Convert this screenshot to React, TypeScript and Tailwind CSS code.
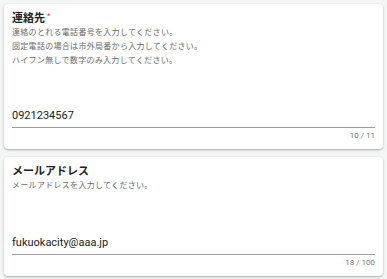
import React from 'react';

const font = { fontFamily: 'Roboto, "Noto Sans CJK JP", sans-serif' };

type FieldProps = {
  label: string;
  required?: boolean;
  hints: string[];
  value: string;
  counter: string;
  spacer: string;
};

function FieldCard({ label, required, hints, value, counter, spacer }: FieldProps) {
  return (
    <div className="rounded bg-white px-2 pt-[7px] pb-[8px] shadow-[0_1px_3px_rgba(0,0,0,0.2),0_1px_1px_rgba(0,0,0,0.12)]">
      <div className="flex items-start text-[11px] font-bold leading-[15px] text-[#222]">
        {label}
        {required && <span className="ml-[2px] text-[7px] leading-[11px] text-[#ef5350]">*</span>}
      </div>
      <div className="text-[8px] leading-[14px] tracking-[0.3px] text-[#6b6b6b]">
        {hints.map((h) => (
          <div key={h}>{h}</div>
        ))}
      </div>
      <div className={spacer} />
      <div className="border-b border-[#9e9e9e] pb-[3px] text-[11px] leading-[16px] text-[#222]">{value}</div>
      <div className="mt-[3px] text-right text-[8px] leading-[10px] text-[#777]">{counter}</div>
    </div>
  );
}

export default function App() {
  return (
    <div className="flex h-[279px] w-[387px] flex-col gap-[8px] bg-[#f4f5f5] px-[4px] pt-[4px]" style={font}>
      <FieldCard
        label="連絡先"
        required
        hints={[
          '連絡のとれる電話番号を入力してください。',
          '固定電話の場合は市外局番から入力してください。',
          'ハイフン無しで数字のみ入力してください。',
        ]}
        value="0921234567"
        counter="10 / 11"
        spacer="h-[40px]"
      />
      <FieldCard
        label="メールアドレス"
        hints={['メールアドレスを入力してください。']}
        value="fukuokacity@aaa.jp"
        counter="18 / 100"
        spacer="h-[42px]"
      />
    </div>
  );
}
